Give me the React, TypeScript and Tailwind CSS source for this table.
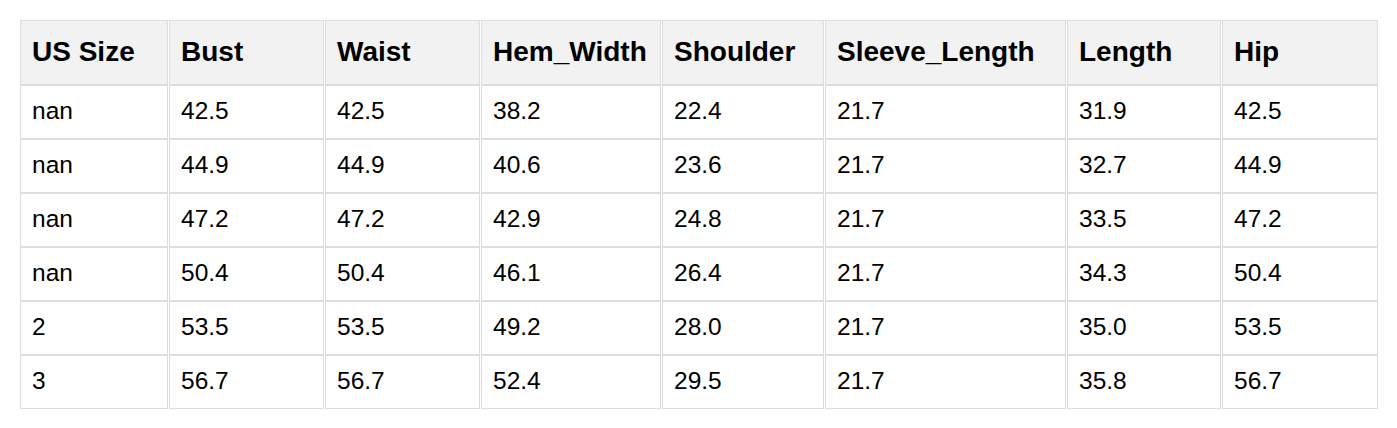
const headers = ["US Size", "Bust", "Waist", "Hem_Width", "Shoulder", "Sleeve_Length", "Length", "Hip"];
const widths = [148, 155, 155, 180, 162, 241, 154, 156];

const rows = [
  ["nan", "42.5", "42.5", "38.2", "22.4", "21.7", "31.9", "42.5"],
  ["nan", "44.9", "44.9", "40.6", "23.6", "21.7", "32.7", "44.9"],
  ["nan", "47.2", "47.2", "42.9", "24.8", "21.7", "33.5", "47.2"],
  ["nan", "50.4", "50.4", "46.1", "26.4", "21.7", "34.3", "50.4"],
  ["2", "53.5", "53.5", "49.2", "28.0", "21.7", "35.0", "53.5"],
  ["3", "56.7", "56.7", "52.4", "29.5", "21.7", "35.8", "56.7"],
];

export default function App() {
  return (
    <div className="min-h-[428px] bg-white pl-[19px] pt-[20px] font-['Liberation_Sans',Arial,sans-serif] text-black">
      <table className="table-fixed border-separate border-spacing-x-[1px] border-spacing-y-0">
        <colgroup>
          {widths.map((w, i) => (
            <col key={i} style={{ width: w }} />
          ))}
        </colgroup>
        <thead>
          <tr className="h-[65px]">
            {headers.map((h) => (
              <th
                key={h}
                className="border border-[#dddddd] bg-[#f2f2f2] pb-[2px] pl-[11px] text-left align-middle text-[28px] font-bold leading-none"
              >
                {h}
              </th>
            ))}
          </tr>
        </thead>
        <tbody>
          {rows.map((r, i) => (
            <tr key={i} className="h-[54px]">
              {r.map((c, j) => (
                <td
                  key={j}
                  className="border border-[#dddddd] pb-[2px] pl-[11px] text-left align-middle text-[24.5px] leading-none"
                >
                  {c}
                </td>
              ))}
            </tr>
          ))}
        </tbody>
      </table>
    </div>
  );
}
